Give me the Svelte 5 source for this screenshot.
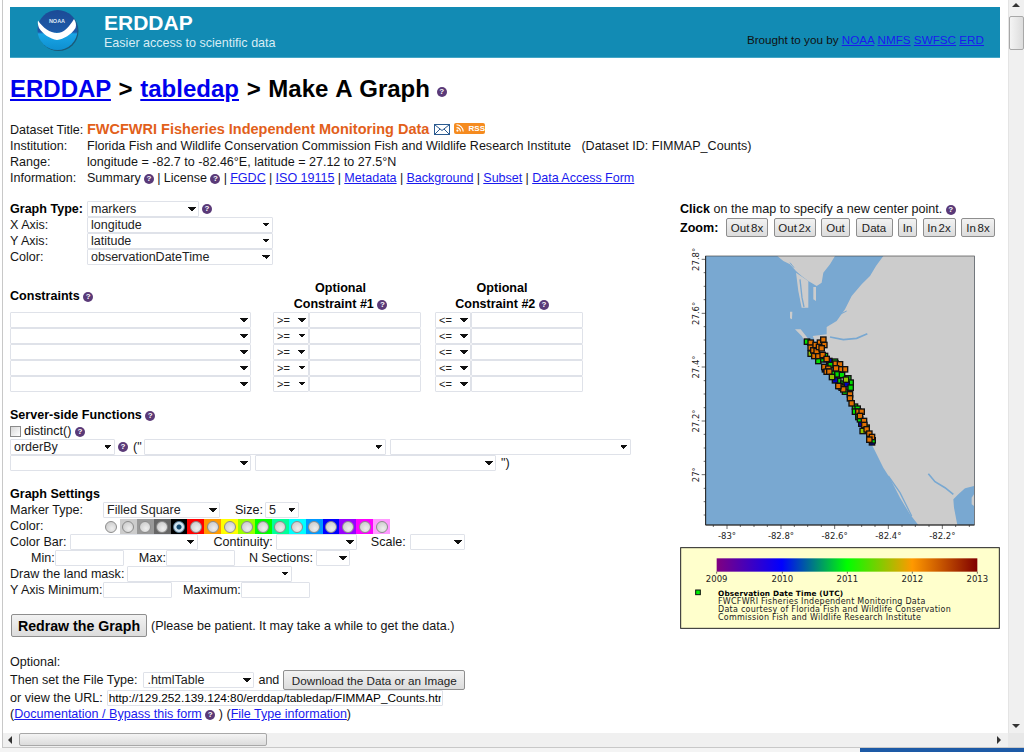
<script>
	// marker colours in the graph
	const O = '#e07000';
	const G = '#00dd00';
	const Y = '#90c000';
	const B = '#0000c0';

	// x, y, fill in the graph's own units (3 units = 1px)
	const markers = [
		[411, 302, G], [422, 338, Y], [445, 360, G], [460, 355, G], [465, 345, G], [465, 385, B],
		[478, 360, B], [495, 362, G], [482, 372, G], [490, 398, G], [505, 420, G], [520, 428, G],
		[535, 412, G], [542, 425, G], [530, 430, B], [495, 418, B], [510, 435, Y], [525, 452, G],
		[555, 497, G], [563, 503, G], [555, 512, G], [565, 528, G], [574, 548, B], [570, 535, G],
		[606, 604, B], [608, 598, G], [590, 560, G], [578, 570, Y],
		[422, 305, O], [422, 320, O], [430, 328, O], [433, 345, O], [445, 345, O], [458, 342, O],
		[437, 312, O], [440, 330, O], [450, 305, O], [460, 296, O], [463, 312, O], [447, 318, O],
		[455, 322, O], [470, 354, O], [463, 378, O], [475, 383, O], [470, 392, O], [478, 392, O],
		[497, 368, O], [510, 370, O], [525, 385, O], [510, 385, O], [498, 382, O], [515, 440, O],
		[520, 445, O], [505, 435, O], [540, 460, O], [540, 472, O], [545, 487, O], [565, 512, O],
		[575, 512, O], [570, 525, O], [582, 540, O], [583, 552, O], [590, 565, O], [598, 578, O],
		[606, 588, O], [598, 596, O],
		[502, 400, G], [516, 402, G], [542, 440, G], [528, 416, Y], [486, 408, Y]
	];

	const xMajor = [[171, '-83°'], [333, '-82.8°'], [494, '-82.6°'], [655, '-82.4°'], [817, '-82.2°']];
	const yMajor = [[55, '27.8°'], [217, '27.6°'], [378, '27.4°'], [540, '27.2°'], [701, '27°']];
	const xMinor = [130, 211, 252, 292, 373, 413, 454, 534, 575, 615, 696, 736, 777, 857, 898];
	const yMinor = [95, 136, 176, 257, 297, 338, 419, 459, 500, 580, 621, 661, 742, 782, 822];
	const barYears = [[140, '2009'], [337, '2010'], [532, '2011'], [727, '2012'], [922, '2013']];

	const swatches = ['#fff', '#ccc', '#999', '#666', '#000', '#f00', '#f90', '#ff0', '#9f0', '#0f0', '#0f9', '#0ff', '#09f', '#00f', '#90f', '#f0f', '#f9f'];
	const zoomButtons = [['Out 8x', 42], ['Out 2x', 42], ['Out', 29], ['Data', 37], ['In', 19], ['In 2x', 33], ['In 8x', 34]];
	const constraintRows = [0, 1, 2, 3, 4];
</script>

{#snippet help()}
	<span class="help">?</span>
{/snippet}

<div class="window">
	<div class="mid">
		<main class="page">
			<header class="banner">
				<svg class="noaa" viewBox="30 10 90 90" role="img" aria-label="NOAA logo">
					<defs>
						<linearGradient id="noaaSky" x1="0" y1="0" x2="0" y2="1">
							<stop offset="0" stop-color="#1c4a96" />
							<stop offset="0.55" stop-color="#1c5aa8" />
							<stop offset="0.6" stop-color="#19a6e6" />
							<stop offset="1" stop-color="#0e8fd0" />
						</linearGradient>
					</defs>
					<circle cx="77" cy="54" r="40" fill="#1a5a78" />
					<circle cx="75" cy="52" r="40" fill="url(#noaaSky)" />
					<path d="M36 33 C46 48 60 58 74 58 C88 58 98 46 108 30 C112 36 113 42 111 48 C102 62 88 70 74 72 C60 70 46 60 38 48 C36 42 35 38 36 33 Z" fill="#fff" />
					<text x="74" y="38" class="noaa-text">NOAA</text>
				</svg>
				<div class="brand">
					<div class="brand-name">ERDDAP</div>
					<div class="brand-sub">Easier access to scientific data</div>
				</div>
				<div class="brought">
					Brought to you by
					<a href="#a">NOAA</a>
					<a href="#a">NMFS</a>
					<a href="#a">SWFSC</a>
					<a href="#a">ERD</a>
				</div>
			</header>

			<h1>
				<a href="#a">ERDDAP</a> &gt; <a href="#a">tabledap</a> &gt; Make A Graph
				<span class="help h1-help">?</span>
			</h1>

			<div class="info">
				<div class="info-row title-row">
					<span class="info-label">Dataset Title:</span>
					<span class="dataset-title">FWCFWRI Fisheries Independent Monitoring Data</span>
					<svg class="mail" viewBox="0 0 16 11" aria-hidden="true">
						<rect x="0.5" y="0.5" width="15" height="10" fill="#fff" stroke="#2a5a90" />
						<path d="M1 1 L8 6.5 L15 1 M1 10 L6 5 M15 10 L10 5" fill="none" stroke="#2a5a90" />
					</svg>
					<span class="rss">
						<svg viewBox="0 0 8 8" aria-hidden="true">
							<circle cx="1.4" cy="6.6" r="1.1" fill="#fff" />
							<path d="M0.5 3.6 A4 4 0 0 1 4.4 7.5 M0.5 0.8 A6.8 6.8 0 0 1 7.2 7.5" fill="none" stroke="#fff" stroke-width="1.1" />
						</svg>
						RSS
					</span>
				</div>
				<div class="info-row">
					<span class="info-label">Institution:</span>
					<span>Florida Fish and Wildlife Conservation Commission Fish and Wildlife Research Institute &nbsp; (Dataset ID: FIMMAP_Counts)</span>
				</div>
				<div class="info-row">
					<span class="info-label">Range:</span>
					<span>longitude = -82.7 to -82.46°E, latitude = 27.12 to 27.5°N</span>
				</div>
				<div class="info-row">
					<span class="info-label">Information:</span>
					<span class="links">
						Summary {@render help()} | License {@render help()} |
						<a href="#a">FGDC</a> | <a href="#a">ISO 19115</a> | <a href="#a">Metadata</a> |
						<a href="#a">Background</a> | <a href="#a">Subset</a> | <a href="#a">Data Access Form</a>
					</span>
				</div>
			</div>

			<div class="columns">
				<form class="form">
					<div class="row">
						<label class="axis-label bold" for="gt">Graph Type:</label>
						<select id="gt" class="w112"><option>markers</option></select>
						<span class="after">{@render help()}</span>
					</div>
					<div class="row">
						<label class="axis-label" for="xa">X Axis:</label>
						<select id="xa" class="w186"><option>longitude</option></select>
					</div>
					<div class="row">
						<label class="axis-label" for="ya">Y Axis:</label>
						<select id="ya" class="w186"><option>latitude</option></select>
					</div>
					<div class="row">
						<label class="axis-label" for="ca">Color:</label>
						<select id="ca" class="w186"><option>observationDateTime</option></select>
					</div>

					<div class="constraints">
						<div class="con-title bold">Constraints {@render help()}</div>
						<div class="con-head bold">Optional<br />Constraint #1 {@render help()}</div>
						<div class="con-head bold">Optional<br />Constraint #2 {@render help()}</div>
						{#each constraintRows as r (r)}
							<div class="con-cell"><select class="w241"><option></option></select></div>
							<div class="con-cell end">
								<select class="op"><option>&gt;=</option></select><input class="w112" type="text" />
							</div>
							<div class="con-cell end">
								<select class="op"><option>&lt;=</option></select><input class="w112" type="text" />
							</div>
						{/each}
					</div>

					<div class="section-title bold server">Server-side Functions {@render help()}</div>
					<div class="row">
						<input class="check" type="checkbox" />
						<span class="distinct">distinct() {@render help()}</span>
					</div>
					<div class="row">
						<select class="w105"><option>orderBy</option></select>
						<span class="after">{@render help()}</span>
						<span class="paren">("</span>
						<select class="w242 ml2"><option></option></select>
						<select class="w241 ml4"><option></option></select>
					</div>
					<div class="row">
						<select class="w241"><option></option></select>
						<select class="w241 ml4"><option></option></select>
						<span class="paren ml3">")</span>
					</div>

					<div class="section-title bold settings">Graph Settings</div>
					<div class="row">
						<span class="marker-label">Marker Type:</span>
						<select class="w117"><option>Filled Square</option></select>
						<span class="ml15">Size:</span>
						<select class="w34 ml2"><option>5</option></select>
					</div>
					<div class="row">
						<span class="marker-label">Color:</span>
						<div class="palette">
							{#each swatches as c, i (i)}
								<span class="swatch" style="background: {c}">
									<input class="radio" type="radio" name="mc" checked={i === 4} />
								</span>
							{/each}
						</div>
					</div>
					<div class="row">
						<span>Color Bar:</span>
						<select class="w128 ml4"><option></option></select>
						<span class="ml15">Continuity:</span>
						<select class="w81 ml3"><option></option></select>
						<span class="ml14">Scale:</span>
						<select class="w55 ml4"><option></option></select>
					</div>
					<div class="row">
						<span class="ml21">Min:</span>
						<input class="w69 ml7" type="text" />
						<span class="ml15">Max:</span>
						<input class="w69 ml6" type="text" />
						<span class="ml14">N Sections:</span>
						<select class="w34 ml3"><option></option></select>
					</div>
					<div class="row">
						<span>Draw the land mask:</span>
						<select class="w165 ml3"><option></option></select>
					</div>
					<div class="row">
						<span class="marker-label">Y Axis Minimum:</span>
						<input class="w69" type="text" />
						<span class="ml11">Maximum:</span>
						<input class="w69 ml5" type="text" />
					</div>

					<div class="redraw-row">
						<button class="redraw" type="button">Redraw the Graph</button>
						<span>(Please be patient. It may take a while to get the data.)</span>
					</div>

					<div class="optional">Optional:</div>
					<div class="row file-row">
						<span>Then set the File Type:</span>
						<select class="w111 ml6"><option>.htmlTable</option></select>
						<span class="ml4">and</span>
						<button class="download" type="button">Download the Data or an Image</button>
					</div>
					<div class="row">
						<span>or view the URL:</span>
						<input class="url" type="text" value="http://129.252.139.124:80/erddap/tabledap/FIMMAP_Counts.htmlTable" />
					</div>
					<div class="row">
						<span>(<a href="#a">Documentation / Bypass this form</a> {@render help()} ) (<a href="#a">File Type information</a>)</span>
					</div>
				</form>

				<aside class="graph">
					<div class="click-line"><b>Click</b> on the map to specify a new center point. {@render help()}</div>
					<div class="zoom-line">
						<b class="zoom-label">Zoom:</b>
						{#each zoomButtons as z (z[0])}
							<button class="zoom-btn" type="button" style="width: {z[1]}px">{z[0]}</button>
						{/each}
					</div>
					<svg class="map" viewBox="30 15 960 1155" role="img" aria-label="Map of observations">
						<defs>
							<linearGradient id="bar">
								<stop offset="0" stop-color="#800080" />
								<stop offset="0.25" stop-color="#0000ff" />
								<stop offset="0.5" stop-color="#00ff00" />
								<stop offset="0.75" stop-color="#ff9900" />
								<stop offset="1" stop-color="#800000" />
							</linearGradient>
							<clipPath id="plot"><rect x="107" y="45" width="806" height="807" /></clipPath>
						</defs>
						<rect x="107" y="45" width="806" height="807" fill="#79a8d1" />
						<g clip-path="url(#plot)">
							<path fill="#ccc" d="M640 45 L912 45 L912 735 L885 742 L865 760 L850 775 L852 800 L862 852 L745 852 L720 820 L690 770 L660 712 L640 680 L620 640 L605 610 L590 570 L565 530 L545 490 L530 440 L500 395 L470 360 L445 320 L428 285 L470 280 L470 258 L500 240 L525 205 L545 165 L575 130 L600 105 L618 75 Z" />
							<path fill="#ccc" d="M322 45 L495 45 L480 70 L460 95 L455 125 L440 135 L415 120 L395 105 L378 90 L360 70 L340 60 Z" />
							<path fill="#ccc" d="M378 95 L415 120 L415 200 L395 200 L385 150 Z" />
							<path fill="#ccc" d="M430 138 L438 138 L438 180 L430 175 Z" />
							<path fill="#ccc" d="M375 265 L392 265 L420 300 L425 315 L410 310 L395 285 Z" />
							<path fill="#ccc" d="M360 212 L367 212 L366 235 L360 232 Z" />
							<path fill="#ccc" d="M905 770 L912 760 L912 795 L905 790 Z" />
							<path fill="none" stroke="#79a8d1" stroke-width="5" d="M480 288 L520 296 L560 292 L592 278" />
							<path fill="none" stroke="#79a8d1" stroke-width="4" d="M390 115 L396 170 L402 198" />
							<path fill="none" stroke="#79a8d1" stroke-width="4" d="M655 705 L690 755 L725 825" />
							<path fill="none" stroke="#79a8d1" stroke-width="5" d="M775 698 L795 722 L825 740 L850 760" />
							<path fill="none" stroke="#79a8d1" stroke-width="3" d="M360 65 L372 80 M500 225 L530 210" />
						</g>
						{#each markers as m, i (i)}
							<rect x={m[0] - 8} y={m[1] - 8} width="16" height="16" fill={m[2]} stroke="#111" stroke-width="4" />
						{/each}
						<rect x="107" y="45" width="806" height="807" fill="none" stroke="#444" stroke-width="2" />
						<path d="M107 45 V852 H913" fill="none" stroke="#222" stroke-width="3" />
						{#each xMinor as x (x)}
							<line x1={x} x2={x} y1="852" y2="858" class="tick" />
						{/each}
						{#each yMinor as y (y)}
							<line x1="101" x2="107" y1={y} y2={y} class="tick" />
						{/each}
						{#each xMajor as t (t[0])}
							<line x1={t[0]} x2={t[0]} y1="852" y2="864" class="tick" />
							<text x={t[0]} y="893" class="axis-x">{t[1]}</text>
						{/each}
						{#each yMajor as t (t[0])}
							<line x1="95" x2="107" y1={t[0]} y2={t[0]} class="tick" />
							<text x="86" y={t[0]} class="axis-y" transform="rotate(-90 86 {t[0]})">{t[1]}</text>
						{/each}

						<rect x="32" y="920" width="956" height="242" fill="#ffffcc" stroke="#222" stroke-width="3" />
						<rect x="140" y="952" width="782" height="40" fill="url(#bar)" />
						{#each barYears as t (t[0])}
							<line x1={t[0]} x2={t[0]} y1="992" y2="998" class="tick" />
							<text x={t[0]} y="1024" class="axis-x">{t[1]}</text>
						{/each}
						<rect x="77" y="1047" width="14" height="14" fill="#00ee00" stroke="#111" stroke-width="3" />
						<text x="144" y="1064" class="legend-head">Observation Date Time (UTC)</text>
						<text x="144" y="1088" class="legend-line">FWCFWRI Fisheries Independent Monitoring Data</text>
						<text x="144" y="1112" class="legend-line">Data courtesy of Florida Fish and Wildlife Conservation</text>
						<text x="144" y="1136" class="legend-line">Commission Fish and Wildlife Research Institute</text>
					</svg>
				</aside>
			</div>
		</main>

		<div class="vscroll">
			<span class="arrow up"></span>
			<span class="vthumb"></span>
			<span class="arrow down"></span>
		</div>
	</div>

	<div class="hscroll">
		<span class="arrow left"></span>
		<span class="hthumb"></span>
		<span class="arrow right"></span>
		<span class="corner"></span>
	</div>
	<div class="taskbar"><span class="start"></span></div>
</div>

<style>
	:global(body) {
		margin: 0;
		background: #fff;
	}

	.window {
		width: 1024px;
		height: 752px;
		display: flex;
		flex-direction: column;
		overflow: hidden;
		font-family: 'Liberation Sans', Arial, sans-serif;
		font-size: 12.55px;
		line-height: 16px;
		color: #151515;
	}

	.mid {
		height: 733px;
		display: flex;
		margin-left: 2px;
		border-left: 1px solid #c8c8c8;
	}

	.page {
		flex: 1;
		min-width: 0;
		overflow: hidden;
		padding: 7px 0 0 7px;
	}

	a {
		color: #1a1aee;
	}

	.bold,
	b {
		font-weight: bold;
		color: #000;
	}

	/* banner */
	.banner {
		width: 990px;
		height: 51px;
		box-sizing: border-box;
		display: flex;
		background: #128bb4;
		border-bottom: 1px solid #44a6c6;
		color: #fff;
	}

	.noaa {
		width: 45px;
		height: 45px;
		margin: 2px 0 0 25px;
		flex: none;
	}

	.noaa-text {
		font-family: 'Liberation Sans', Arial, sans-serif;
		font-size: 11px;
		font-weight: bold;
		fill: #dfe8f5;
		text-anchor: middle;
	}

	.brand {
		margin-left: 24px;
		padding-top: 5px;
	}

	.brand-name {
		font-size: 21px;
		font-weight: bold;
		line-height: 22px;
	}

	.brand-sub {
		margin-top: 1px;
		color: #d8edf4;
	}

	.brought {
		margin-left: auto;
		padding: 25px 16px 0 0;
		font-size: 11.7px;
		color: #111;
	}

	h1 {
		margin: 16px 0 0;
		font-size: 24px;
		line-height: 30px;
		word-spacing: 1px;
		color: #000;
	}

	h1 a {
		color: #0000ee;
	}

	.help {
		display: inline-block;
		width: 10px;
		height: 10px;
		border-radius: 50%;
		background: #5a3a78;
		color: #fff;
		font-size: 8px;
		font-weight: bold;
		line-height: 10px;
		text-align: center;
		vertical-align: 1px;
	}

	.h1-help {
		margin-left: -1px;
		vertical-align: 3px;
	}

	/* dataset info */
	.info {
		margin-top: 17px;
	}

	.info-row {
		display: flex;
		white-space: pre-wrap;
	}

	.title-row {
		height: 17px;
		align-items: center;
	}

	.info-label {
		width: 77px;
		flex: none;
	}

	.links {
		word-spacing: -0.2px;
	}

	.dataset-title {
		margin-top: -1px;
		font-size: 14.5px;
		font-weight: bold;
		color: #e2601a;
	}

	.mail {
		width: 16px;
		height: 11px;
		margin-left: 5px;
	}

	.rss {
		display: flex;
		align-items: center;
		gap: 2px;
		width: 31px;
		height: 11px;
		box-sizing: border-box;
		margin: -3px 0 0 4px;
		padding-left: 2px;
		border-radius: 2px;
		background: #f58b1f;
		color: #fff;
		font-size: 8px;
		font-weight: bold;
		line-height: 11px;
	}

	.rss svg {
		width: 8px;
		height: 8px;
	}

	.columns {
		display: flex;
		margin-top: 15px;
	}

	/* form */
	.form {
		width: 670px;
		flex: none;
	}

	.row {
		display: flex;
		align-items: center;
		height: 16px;
		white-space: nowrap;
	}

	select,
	input[type='text'] {
		box-sizing: border-box;
		height: 16px;
		margin: 0;
		border: 1px solid #dfe2e9;
		border-radius: 1px;
		background-color: #fff;
		font-family: inherit;
		font-size: 12.5px;
		color: #222;
		flex: none;
	}

	select {
		appearance: none;
		padding: 0 0 0 3px;
		background-image: linear-gradient(45deg, transparent 50%, #111 50%), linear-gradient(-45deg, transparent 50%, #111 50%);
		background-repeat: no-repeat;
		background-size: 4px 4px, 4px 4px;
		background-position: right 6px top 5px, right 2px top 5px;
	}

	input[type='text'] {
		padding: 0 2px;
	}

	.w34 { width: 34px; }
	.w55 { width: 55px; }
	.w69 { width: 69px; }
	.w81 { width: 81px; }
	.w105 { width: 105px; }
	.w111 { width: 111px; }
	.w112 { width: 112px; }
	.w117 { width: 117px; }
	.w128 { width: 128px; }
	.w165 { width: 165px; }
	.w186 { width: 186px; }
	.w241 { width: 241px; }
	.w242 { width: 242px; }

	.ml2 { margin-left: 2px; }
	.ml3 { margin-left: 3px; }
	.ml4 { margin-left: 4px; }
	.ml5 { margin-left: 5px; }
	.ml6 { margin-left: 6px; }
	.ml7 { margin-left: 7px; }
	.ml11 { margin-left: 11px; }
	.ml14 { margin-left: 14px; }
	.ml15 { margin-left: 15px; }
	.ml21 { margin-left: 21px; }

	.axis-label {
		width: 77px;
		flex: none;
	}

	.marker-label {
		width: 93px;
		flex: none;
	}

	.after {
		margin-left: 3px;
		display: flex;
	}

	.paren {
		margin-left: 5px;
		font-weight: normal;
	}

	.constraints {
		display: grid;
		grid-template-columns: 250px 161px 162px;
		grid-template-rows: 32px repeat(5, 16px);
		margin-top: 15px;
	}

	.con-title {
		line-height: 32px;
	}

	.con-head {
		text-align: center;
	}

	.con-cell {
		display: flex;
	}

	.con-cell.end {
		justify-content: flex-end;
	}

	.op {
		width: 36px;
		font-size: 11px;
	}

	.section-title {
		height: 16px;
	}

	.server {
		margin-top: 15px;
	}

	.settings {
		margin-top: 15px;
	}

	.check {
		width: 11px;
		height: 11px;
		margin: 0;
		appearance: none;
		border: 1px solid #8a8a8a;
		background: linear-gradient(135deg, #d8d8d8, #fff);
	}

	.distinct {
		margin-left: 3px;
	}

	.palette {
		display: flex;
		height: 15px;
		margin-top: 1px;
	}

	.swatch {
		width: 16.9px;
		height: 15px;
		display: flex;
		align-items: center;
		justify-content: center;
	}

	.radio {
		width: 12px;
		height: 12px;
		margin: 0;
		appearance: none;
		border: 1px solid #8c8c8c;
		border-radius: 50%;
		background: radial-gradient(circle at 60% 65%, #eee, #c4c4c4);
	}

	.radio:checked {
		background: radial-gradient(circle, #124a70 0 2px, #cfe3f0 3px);
		border-color: #5a7e98;
	}

	.redraw-row {
		display: flex;
		align-items: center;
		gap: 4px;
		margin-top: 16px;
		margin-left: 1px;
	}

	button {
		box-sizing: border-box;
		margin: 0;
		padding: 0;
		border: 1px solid #8e8e8e;
		border-radius: 2px;
		background: linear-gradient(#f2f2f2, #dcdcdc);
		font-family: inherit;
		color: #222;
	}

	.redraw {
		width: 136px;
		height: 23px;
		font-size: 14.2px;
		font-weight: bold;
		color: #000;
	}

	.optional {
		margin-top: 17px;
	}

	.file-row {
		height: 20px;
	}

	.download {
		width: 182px;
		height: 20px;
		margin-left: 4px;
		font-size: 11.7px;
	}

	input.url {
		width: 336px;
		margin-left: 4px;
		padding: 0 1px;
		font-size: 11.8px;
		color: #000;
	}

	/* graph */
	.graph {
		width: 320px;
		flex: none;
	}

	.click-line {
		height: 17px;
		white-space: nowrap;
	}

	.zoom-line {
		display: flex;
		gap: 5.5px;
		align-items: center;
		height: 19px;
	}

	.zoom-label {
		width: 40.5px;
	}

	.zoom-btn {
		height: 19px;
		flex: none;
		font-size: 11.5px;
		word-spacing: -1.5px;
		white-space: nowrap;
	}

	.map {
		display: block;
		width: 320px;
		height: 385px;
		margin-top: 9px;
		font-family: 'DejaVu Sans', sans-serif;
	}

	.tick {
		stroke: #222;
		stroke-width: 2;
	}

	.axis-x,
	.axis-y {
		font-size: 25.5px;
		fill: #222;
		text-anchor: middle;
	}

	.legend-head {
		font-size: 22px;
		font-weight: bold;
		letter-spacing: 0.5px;
		fill: #000;
	}

	.legend-line {
		font-size: 24px;
		letter-spacing: 0.75px;
		fill: #222;
	}

	/* browser scrollbars */
	.vscroll {
		position: relative;
		width: 15px;
		flex: none;
		background: #f0f0f0;
		border-left: 1px solid #e4e4e4;
	}

	.vthumb {
		position: absolute;
		top: 16px;
		left: 0;
		width: 13px;
		height: 32px;
		border: 1px solid #a8a8a8;
		border-radius: 2px;
		background: linear-gradient(90deg, #f4f4f4, #dcdcdc);
	}

	.arrow {
		position: absolute;
		width: 0;
		height: 0;
		border: 4px solid transparent;
	}

	.up {
		top: 3px;
		left: 3px;
		border-top: 0;
		border-bottom-color: #333;
	}

	.down {
		bottom: 5px;
		left: 3px;
		border-bottom: 0;
		border-top-color: #333;
	}

	.hscroll {
		position: relative;
		height: 15px;
		flex: none;
		margin-left: 2px;
		background: #f0f0f0;
		border-left: 1px solid #c8c8c8;
		border-bottom: 1px solid #c8c8c8;
		box-sizing: border-box;
	}

	.hthumb {
		position: absolute;
		top: 0;
		left: 16px;
		width: 248px;
		height: 13px;
		box-sizing: border-box;
		border: 1px solid #a8a8a8;
		border-radius: 2px;
		background: linear-gradient(#f4f4f4, #dcdcdc);
	}

	.left {
		top: 3px;
		left: 5px;
		border-left: 0;
		border-right-color: #333;
	}

	.right {
		top: 3px;
		right: 23px;
		border-right: 0;
		border-left-color: #333;
	}

	.corner {
		position: absolute;
		top: 0;
		right: 0;
		width: 16px;
		height: 14px;
		background: #e8e8e8;
	}

	.taskbar {
		flex: 1;
		display: flex;
		justify-content: flex-end;
		background: #f4f4f4;
	}

	.start {
		width: 164px;
		background: #1d5aa6;
	}
</style>
